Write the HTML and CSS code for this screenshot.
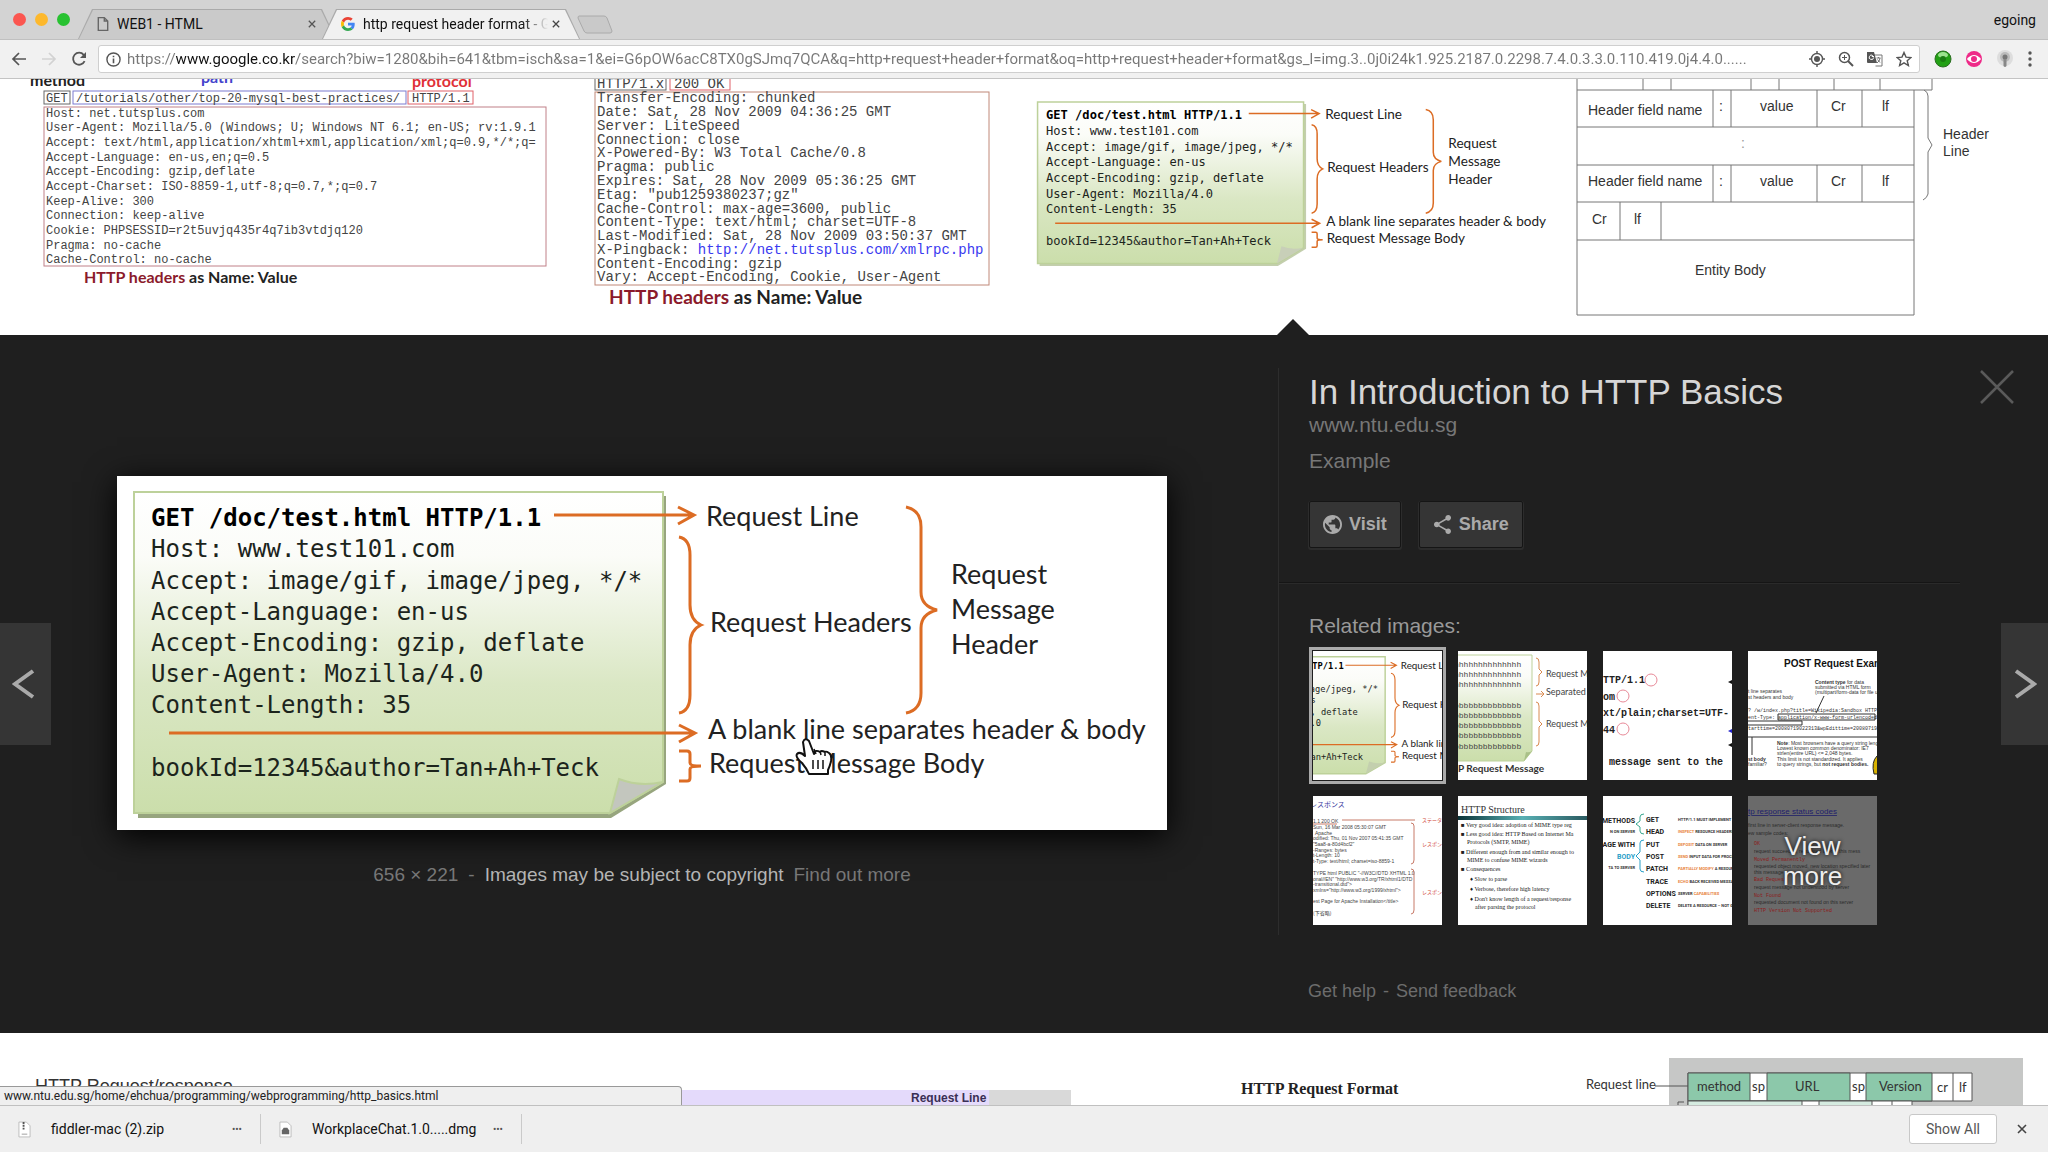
FILE: index.html
```html
<!DOCTYPE html>
<html lang="en">
<head>
  <meta charset="UTF-8" />
  <title>http request header format - Google Search</title>
  <link rel="stylesheet" href="styles.css">
</head>
<body>

  <header class="tabstrip">
    <div class="lights">
      <span class="light red"></span>
      <span class="light yellow"></span>
      <span class="light green"></span>
    </div>
    <div class="tabs">
      <div class="tab">
        <svg class="tab-icon" viewBox="0 0 14 18" width="12" height="16"><path d="M1.5 1.5h7l4 4v11h-11zM8.5 1.5v4h4" fill="none" stroke="#666" stroke-width="1.6"/></svg>
        <span class="tab-title">WEB1 - HTML</span>
        <button class="tab-close" aria-label="Close tab"><svg viewBox="0 0 10 10" width="8" height="8"><path d="M1 1l8 8M9 1l-8 8" stroke="#555" stroke-width="1.6"/></svg></button>
      </div>
      <div class="tab active">
        <svg class="tab-icon" viewBox="0 0 48 48" width="14" height="14">
          <path fill="#EA4335" d="M24 9.5c3.54 0 6.71 1.22 9.21 3.6l6.85-6.85C35.9 2.38 30.47 0 24 0 14.62 0 6.51 5.38 2.56 13.22l7.98 6.19C12.43 13.72 17.74 9.5 24 9.5z"/>
          <path fill="#4285F4" d="M46.98 24.55c0-1.57-.15-3.09-.38-4.55H24v9.02h12.94c-.58 2.96-2.26 5.48-4.78 7.18l7.73 6c4.51-4.18 7.09-10.36 7.09-17.65z"/>
          <path fill="#FBBC05" d="M10.53 28.59c-.48-1.45-.76-2.99-.76-4.59s.27-3.14.76-4.59l-7.98-6.19C.92 16.46 0 20.12 0 24c0 3.88.92 7.54 2.56 10.78l7.97-6.19z"/>
          <path fill="#34A853" d="M24 48c6.48 0 11.93-2.13 15.89-5.81l-7.73-6c-2.15 1.45-4.92 2.3-8.16 2.3-6.26 0-11.57-4.22-13.47-9.91l-7.98 6.19C6.51 42.62 14.62 48 24 48z"/>
        </svg>
        <span class="tab-title fade">http request header format - G</span>
        <button class="tab-close" aria-label="Close tab"><svg viewBox="0 0 10 10" width="8" height="8"><path d="M1 1l8 8M9 1l-8 8" stroke="#444" stroke-width="1.6"/></svg></button>
      </div>
      <button class="new-tab" aria-label="New tab"><svg viewBox="0 0 36 19" width="36" height="19"><path d="M2 1h25q2 0 3 2l5 13q0 2-2 2H10q-2 0-3-2L1 3q0-2 1-2z" fill="#c9c9c9" stroke="#aaa"/></svg></button>
    </div>
    <span class="profile">egoing</span>
  </header>

  <nav class="toolbar">
    <button aria-label="Back"><svg viewBox="0 0 16 16" width="16" height="16"><path d="M15 8H2M8 2L2 8l6 6" fill="none" stroke="#555" stroke-width="1.7"/></svg></button>
    <button aria-label="Forward"><svg viewBox="0 0 16 16" width="16" height="16"><path d="M1 8h13M8 2l6 6-6 6" fill="none" stroke="#d2d2d2" stroke-width="1.7"/></svg></button>
    <button aria-label="Reload"><svg viewBox="0 0 16 16" width="16" height="16"><path d="M13.6 10.2a6 6 0 1 1-.9-6.4l1.3 1.5" fill="none" stroke="#555" stroke-width="1.8"/><path d="M15 1v6H9z" fill="#555"/></svg></button>
    <div class="omnibox">
      <svg viewBox="0 0 16 16" width="15" height="15"><circle cx="8" cy="8" r="7" fill="none" stroke="#555" stroke-width="1.5"/><path d="M8 7v5M8 4v1.6" stroke="#555" stroke-width="1.7"/></svg>
      <input type="text" class="url" aria-label="Address" value="https://www.google.co.kr/search?biw=1280&amp;bih=641&amp;tbm=isch&amp;sa=1&amp;ei=G6pOW6acC8TX0gSJmq7QCA&amp;q=http+request+header+format&amp;oq=http+request+header+format&amp;gs_l=img.3..0j0i24k1.925.2187.0.2298.7.4.0.3.3.0.110.419.0j4.4.0......">
      <svg viewBox="0 0 16 16" width="16" height="16"><circle cx="8" cy="8" r="5.5" fill="none" stroke="#555" stroke-width="1.4"/><circle cx="8" cy="8" r="3" fill="#555"/><path d="M8 0v3M8 13v3M0 8h3M13 8h3" stroke="#555" stroke-width="1.4"/></svg>
      <svg viewBox="0 0 16 16" width="16" height="16"><circle cx="6.5" cy="6.5" r="5" fill="none" stroke="#555" stroke-width="1.5"/><path d="M10 10l5 5" stroke="#555" stroke-width="2"/><path d="M4 6.5h5M6.5 4v5" stroke="#555"/></svg>
      <svg viewBox="0 0 16 16" width="16" height="16"><path d="M7 4h8v11H8.5" fill="none" stroke="#777"/><path d="M0 1h7l3 11H1q-1 0-1-1z" fill="#555"/><path d="M7 5.5H4.8M6.6 6.5a2.2 2.2 0 1 1-.8-1.9" fill="none" stroke="#fff"/><path d="M9.5 7h4M11.5 6v1M10 12q3-2 3-5M10.5 8.5l2.5 3" fill="none" stroke="#777"/></svg>
      <svg viewBox="0 0 16 16" width="16" height="16"><path d="M8 1.5l2 4.6 5 .4-3.8 3.2 1.2 4.8L8 11.9l-4.4 2.6 1.2-4.8L1 6.5l5-.4z" fill="none" stroke="#555" stroke-width="1.4"/></svg>
    </div>
    <svg viewBox="0 0 18 18" width="18" height="18"><circle cx="9" cy="9" r="8" fill="#22a015" stroke="#2b6e22"/><ellipse cx="9" cy="5" rx="5" ry="3" fill="#9be28e"/><circle cx="9" cy="9" r="3" fill="#1a7d12"/></svg>
    <svg viewBox="0 0 18 18" width="16" height="16"><circle cx="9" cy="9" r="9" fill="#ee2a88"/><path d="M1 9q8-9 16 0-8 9-16 0z" fill="#fff"/><circle cx="9" cy="9" r="3.4" fill="#ee2a88"/></svg>
    <svg viewBox="0 0 18 18" width="18" height="18"><circle cx="9" cy="8" r="8" fill="#ddd"/><circle cx="9" cy="7" r="5" fill="#bbb"/><circle cx="9" cy="7" r="2.5" fill="#777"/><path d="M7.5 9h3v7q-1.500 2-3 0z" fill="#888"/></svg>
    <button class="menu" aria-label="Menu"><svg viewBox="0 0 4 16" width="4" height="16"><circle cx="2" cy="2" r="1.7" fill="#555"/><circle cx="2" cy="8" r="1.7" fill="#555"/><circle cx="2" cy="14" r="1.7" fill="#555"/></svg></button>
  </nav>

  <main class="page">

    <section class="results first-row">
      <svg class="result" viewBox="0 79 570 256">
        <g class="lato b16">
          <text x="30" y="86" fill="#222">method</text>
          <text x="201" y="83" fill="#4444cc">path</text>
          <text x="412" y="87" fill="#e03038">protocol</text>
          <text x="84" y="283" fill="#8b1a2b">HTTP headers <tspan fill="#222">as Name: Value</tspan></text>
        </g>
        <g fill="none">
          <rect x="44" y="91" width="26" height="13" stroke="#666"/>
          <rect x="73" y="91" width="333" height="13" stroke="#7b7bd0"/>
          <rect x="408" y="91" width="65" height="13" stroke="#e06068"/>
          <rect x="44" y="107" width="502" height="159" stroke="#c08088"/>
        </g>
        <g class="mono m12" fill="#444">
          <text x="46" y="102">GET</text>
          <text x="76" y="102">/tutorials/other/top-20-mysql-best-practices/</text>
          <text x="412" y="102">HTTP/1.1</text>
          <text x="46" y="117">Host: net.tutsplus.com</text>
          <text x="46" y="131">User-Agent: Mozilla/5.0 (Windows; U; Windows NT 6.1; en-US; rv:1.9.1</text>
          <text x="46" y="146">Accept: text/html,application/xhtml+xml,application/xml;q=0.9,*/*;q=</text>
          <text x="46" y="161">Accept-Language: en-us,en;q=0.5</text>
          <text x="46" y="175">Accept-Encoding: gzip,deflate</text>
          <text x="46" y="190">Accept-Charset: ISO-8859-1,utf-8;q=0.7,*;q=0.7</text>
          <text x="46" y="205">Keep-Alive: 300</text>
          <text x="46" y="219">Connection: keep-alive</text>
          <text x="46" y="234">Cookie: PHPSESSID=r2t5uvjq435r4q7ib3vtdjq120</text>
          <text x="46" y="249">Pragma: no-cache</text>
          <text x="46" y="263">Cache-Control: no-cache</text>
        </g>
      </svg>

      <svg class="result" viewBox="570 79 450 256">
        <g fill="none">
          <rect x="595" y="70" width="71" height="20" stroke="#666"/>
          <rect x="670" y="70" width="60" height="20" stroke="#e06068"/>
          <rect x="595" y="92" width="394" height="193" stroke="#c08878"/>
        </g>
        <g class="mono m14" fill="#444">
          <text x="597" y="88">HTTP/1.x</text>
          <text x="674" y="88">200 OK</text>
          <text x="597" y="102">Transfer-Encoding: chunked</text>
          <text x="597" y="116">Date: Sat, 28 Nov 2009 04:36:25 GMT</text>
          <text x="597" y="130">Server: LiteSpeed</text>
          <text x="597" y="144">Connection: close</text>
          <text x="597" y="157">X-Powered-By: W3 Total Cache/0.8</text>
          <text x="597" y="171">Pragma: public</text>
          <text x="597" y="185">Expires: Sat, 28 Nov 2009 05:36:25 GMT</text>
          <text x="597" y="199">Etag: "pub1259380237;gz"</text>
          <text x="597" y="213">Cache-Control: max-age=3600, public</text>
          <text x="597" y="226">Content-Type: text/html; charset=UTF-8</text>
          <text x="597" y="240">Last-Modified: Sat, 28 Nov 2009 03:50:37 GMT</text>
          <text x="597" y="254">X-Pingback: <tspan fill="#3a3af0">http://net.tutsplus.com/xmlrpc.php</tspan></text>
          <text x="597" y="268">Content-Encoding: gzip</text>
          <text x="597" y="281">Vary: Accept-Encoding, Cookie, User-Agent</text>
        </g>
        <text class="lato b19" x="609" y="304" fill="#8b1a2b">HTTP headers <tspan fill="#222">as Name: Value</tspan></text>
      </svg>

      <svg class="result" viewBox="1020 79 540 256">
        <svg x="1029" y="94" width="528" height="178" viewBox="117 475 1050 354">
          <path d="M138 495h530v288l-56 34H138z" fill="#a9b98a" opacity=".7"/>
          <path d="M134 491h529v290l-53 31H134z" fill="url(#paper)" stroke="#bdd19a" stroke-width="3"/>
          <path d="M610 812l9-34q20 8 44 3z" fill="#c8cfb8"/>
          <g class="console">
            <text class="bold" x="151" y="525">GET /doc/test.html HTTP/1.1</text>
            <text x="151" y="556">Host: www.test101.com</text>
            <text x="151" y="588">Accept: image/gif, image/jpeg, */*</text>
            <text x="151" y="619">Accept-Language: en-us</text>
            <text x="151" y="650">Accept-Encoding: gzip, deflate</text>
            <text x="151" y="681">User-Agent: Mozilla/4.0</text>
            <text x="151" y="712">Content-Length: 35</text>
            <text x="151" y="775">bookId=12345&amp;author=Tan+Ah+Teck</text>
          </g>
          <g class="arrows">
            <path d="M554 514h138M678 506l16 8-16 9"/>
            <path d="M169 732h524M679 724l16 8-16 9"/>
            <path d="M679 536q11 2 11 18v50q0 15 11 20-11 5-11 20v50q0 16-11 18"/>
            <path d="M679 750h8q3 0 3 3v9q0 3 11 3-11 0-11 3v9q0 3-3 3h-8"/>
            <path d="M906 506q15 3 15 20v65q0 14 16 18-16 4-16 18v65q0 17-15 20"/>
          </g>
          <g class="labels">
            <text x="706" y="525">Request Line</text>
            <text x="710" y="631">Request Headers</text>
            <text x="951" y="583">Request</text>
            <text x="951" y="618">Message</text>
            <text x="951" y="653">Header</text>
            <text x="708" y="738">A blank line separates header &amp; body</text>
            <text x="709" y="772">Request Message Body</text>
          </g>
        </svg>
      </svg>

      <svg class="result" viewBox="1560 79 488 256">
        <g fill="none" stroke="#777">
          <path d="M1577 79v236h337V90M1577 90h355V79M1643 79v11M1671 79v11M1751 79v11M1779 79v11M1834 79v11M1880 79v11"/>
          <path d="M1577 127h337M1577 165h337M1577 202h337M1577 240h337"/>
          <path d="M1713 90v37M1731 90v37M1817 90v37M1862 90v37M1713 165v37M1731 165v37M1817 165v37M1862 165v37M1620 202v38M1661 202v38"/>
          <path d="M1924 90q4 2 4 6v42l4 7-4 7v42q-1 4-5 6"/>
        </g>
        <g class="arial s14" fill="#333">
          <text x="1588" y="115">Header field name</text><text x="1719" y="111">:</text><text x="1760" y="111">value</text><text x="1831" y="111">Cr</text><text x="1882" y="111">lf</text>
          <text x="1741" y="148" fill="#999">:</text>
          <text x="1588" y="186">Header field name</text><text x="1719" y="186">:</text><text x="1760" y="186">value</text><text x="1831" y="186">Cr</text><text x="1882" y="186">lf</text>
          <text x="1592" y="224">Cr</text><text x="1634" y="224">lf</text>
          <text x="1695" y="275">Entity Body</text>
          <text x="1943" y="139">Header</text><text x="1943" y="156">Line</text>
        </g>
      </svg>
    </section>

    <section class="viewer">
      <button class="nav prev" aria-label="Previous"><svg viewBox="0 0 24 30" width="24" height="30"><path d="M21 2L3 15l18 13" fill="none" stroke="#aaa" stroke-width="4"/></svg></button>

      <figure class="stage">
        <svg class="photo" viewBox="117 475 1050 354">
          <defs>
            <linearGradient id="paper" x1="0" y1="0" x2="0" y2="1">
              <stop offset="0" stop-color="#fff"/>
              <stop offset=".2" stop-color="#fbfcf8"/>
              <stop offset=".6" stop-color="#dae7c4"/>
              <stop offset="1" stop-color="#cbdeab"/>
            </linearGradient>
          </defs>
          <path d="M138 495h528v288l-55 34H138z" fill="#97a57e"/>
          <path d="M134 491h529v290l-53 31H134z" fill="url(#paper)" stroke="#bdd19a" stroke-width="2"/>
          <path d="M610 812l9-34q20 8 44 3z" fill="#c3c6be" stroke="#bdd19a" stroke-width="2"/>
          <g class="console">
            <text class="bold" x="151" y="525">GET /doc/test.html HTTP/1.1</text>
            <text x="151" y="556">Host: www.test101.com</text>
            <text x="151" y="588">Accept: image/gif, image/jpeg, */*</text>
            <text x="151" y="619">Accept-Language: en-us</text>
            <text x="151" y="650">Accept-Encoding: gzip, deflate</text>
            <text x="151" y="681">User-Agent: Mozilla/4.0</text>
            <text x="151" y="712">Content-Length: 35</text>
            <text x="151" y="775">bookId=12345&amp;author=Tan+Ah+Teck</text>
          </g>
          <g class="arrows">
            <path d="M554 514h138M678 506l16 8-16 9"/>
            <path d="M169 732h524M679 724l16 8-16 9"/>
            <path d="M679 536q11 2 11 18v50q0 15 11 20-11 5-11 20v50q0 16-11 18"/>
            <path d="M679 750h8q3 0 3 3v9q0 3 11 3-11 0-11 3v9q0 3-3 3h-8"/>
            <path d="M906 506q15 3 15 20v65q0 14 16 18-16 4-16 18v65q0 17-15 20"/>
          </g>
          <g class="labels">
            <text x="706" y="525">Request Line</text>
            <text x="710" y="631">Request Headers</text>
            <text x="951" y="583">Request</text>
            <text x="951" y="618">Message</text>
            <text x="951" y="653">Header</text>
            <text x="708" y="738">A blank line separates header &amp; body</text>
            <text x="709" y="772">Request Message Body</text>
          </g>
          <!-- hand pointer -->
          <path d="M803 741q2-5 6-1l5 13q1-5 6-2 1-2 5 0 1-1 4 1 3 2 2 8-1 5-3 9v4h-19q-2-5-7-11-7-6-5-9 3-3 8 2z" fill="#fff" stroke="#111" stroke-width="2" stroke-linejoin="round"/>
          <path d="M813 759v9M818 759v9M823 759v9M814 748l2 5M820 750l1 4M825 752v3" fill="none" stroke="#111" stroke-width="1.5"/>
        </svg>
        <figcaption class="caption">
          <span>656 × 221</span><span>-</span><span class="notice">Images may be subject to copyright</span><a href="#">Find out more</a>
        </figcaption>
      </figure>

      <aside class="info">
        <div class="details">
          <h1>In Introduction to HTTP Basics</h1>
          <a class="site" href="#">www.ntu.edu.sg</a>
          <p class="desc">Example</p>
          <div class="actions">
            <button class="action"><svg viewBox="2 2 20 20" width="19" height="19"><path fill="#aaa" d="M12 2C6.480 2 2 6.480 2 12s4.480 10 10 10 10-4.480 10-10S17.520 2 12 2zm-1 17.930c-3.950-.49-7-3.850-7-7.930 0-.62.080-1.210.210-1.790L9 15v1c0 1.100.900 2 2 2v1.930zm6.900-2.540c-.26-.81-1-1.390-1.900-1.390h-1v-3c0-.55-.45-1-1-1H8v-2h2c.550 0 1-.45 1-1V7h2c1.100 0 2-.9 2-2v-.41c2.930 1.190 5 4.060 5 7.410 0 2.080-.8 3.970-2.100 5.390z"/></svg>Visit</button>
            <button class="action"><svg viewBox="2 2 20 20" width="19" height="19"><path fill="#aaa" d="M18 16.080c-.76 0-1.440.3-1.960.77L8.910 12.700c.050-.23.090-.46.090-.7s-.04-.47-.09-.7l7.050-4.110c.540.500 1.250.810 2.040.810 1.660 0 3-1.340 3-3s-1.340-3-3-3-3 1.340-3 3c0 .240.040.470.090.700L8.040 9.810C7.500 9.310 6.790 9 6 9c-1.660 0-3 1.340-3 3s1.340 3 3 3c.790 0 1.500-.31 2.040-.81l7.120 4.160c-.05.210-.08.430-.08.650 0 1.610 1.310 2.920 2.920 2.920s2.920-1.310 2.920-2.920-1.310-2.920-2.920-2.920z"/></svg>Share</button>
          </div>
          <hr>
          <h2>Related images:</h2>
          <div class="thumbs">
            <svg class="thumb selected" viewBox="465 475 354 354">
              <path d="M134 491h529v290l-53 31H134z" fill="url(#paper)" stroke="#bdd19a" stroke-width="4"/>
              <path d="M610 812l9-34q20 8 44 3z" fill="#c3cfae"/>
              <g class="console">
                <text class="bold" x="463" y="525">TP/1.1</text>
                <text x="456" y="588">age/jpeg, */*</text>
                <text x="458" y="619">s</text>
                <text x="458" y="650">, deflate</text>
                <text x="458" y="681">.0</text>
                <text x="458" y="775">an+Ah+Teck</text>
              </g>
              <g class="arrows">
                <path d="M554 514h138M678 506l16 8-16 9M465 732h228M679 724l16 8-16 9"/>
                <path d="M679 536q11 2 11 18v50q0 15 11 20-11 5-11 20v50q0 16-11 18M679 750h8q3 0 3 3v9q0 3 11 3-11 0-11 3v9q0 3-3 3h-8"/>
              </g>
              <g class="labels">
                <text x="706" y="525">Request L</text>
                <text x="710" y="631">Request H</text>
                <text x="708" y="738">A blank lin</text>
                <text x="709" y="772">Request M</text>
              </g>
            </svg>

            <svg class="thumb" viewBox="0 0 129 129">
              <path d="M-2 4h76v96l-8 10H-2z" fill="url(#paper)" stroke="#bdd19a"/>
              <path d="M66 110l2-9q3 1 6-1z" fill="#a9c088"/>
              <g class="mono m8" fill="#444">
                <text x="-4" y="16">hhhhhhhhhhhhhh</text><text x="-4" y="26">hhhhhhhhhhhhhh</text><text x="-4" y="36">hhhhhhhhhhhhhh</text>
                <text x="-4" y="57">bbbbbbbbbbbbbb</text><text x="-4" y="67">bbbbbbbbbbbbbb</text><text x="-4" y="77">bbbbbbbbbbbbbb</text><text x="-4" y="87">bbbbbbbbbbbbbb</text><text x="-4" y="98">bbbbbbbbbbbbbb</text>
              </g>
              <path d="M78 7q3 0 3 4v7l3 3-3 3v7q0 4-3 4M78 51q3 0 3 4v15l3 3-3 3v15q0 4-3 4M78 43h8l-3-3M86 43l-3 3" fill="none" stroke="#d98a50"/>
              <g class="lato s9" fill="#444"><text x="88" y="26">Request M</text><text x="88" y="44">Separated</text><text x="88" y="76">Request M</text></g>
              <text class="lato b10" x="0" y="121" fill="#333">P Request Message</text>
            </svg>

            <svg class="thumb" viewBox="0 0 129 129">
              <g class="mono b10" fill="#222">
                <text x="0" y="32">TTP/1.1</text><text x="0" y="49">om</text><text x="0" y="65">xt/plain;charset=UTF-</text><text x="0" y="82">44</text><text x="6" y="114">message sent to the</text>
              </g>
              <g fill="none" stroke="#e88a98"><circle cx="48" cy="29" r="6"/><circle cx="20" cy="45" r="6"/><circle cx="20" cy="78" r="6"/></g>
              <path d="M125 31l4-2v4zM125 94l4-2v4z" fill="#111"/><path d="M125 80l4-2v4z" fill="#22c"/>
            </svg>

            <svg class="thumb" viewBox="0 0 129 129">
              <text class="arial b10" x="36" y="16" fill="#111">POST Request Exam</text>
              <g class="arial s5" fill="#333">
                <text x="67" y="33"><tspan font-weight="bold">Content type</tspan> for data</text><text x="67" y="38">submitted via HTML form</text><text x="67" y="43">(multipart/form-data for file up</text>
                <text x="0" y="42">t line separates</text><text x="0" y="48">st headers and body</text>
                <text x="29" y="94"><tspan font-weight="bold">Note</tspan>: Most browsers have a query string length</text><text x="29" y="99">Lowest known common denominator: IE7</text><text x="29" y="104">strlen(entire URL) &lt;= 2,048 bytes.</text><text x="29" y="110">This limit is not standardized. It applies</text><text x="29" y="115">to query strings, but <tspan font-weight="bold">not request bodies.</tspan></text>
                <text x="0" y="110" font-weight="bold">st body</text><text x="0" y="115">familiar?</text>
              </g>
              <g class="mono m5" fill="#333"><text x="0" y="61">? /w/index.php?title=Wikipedia:Sandbox HTTP/1</text><text x="0" y="68">ent-Type: application/x-www-form-urlencoded</text><text x="0" y="79">tarttime=20080719022313&amp;wpEdittime=20080719</text></g>
              <path d="M76 45l-8 17M30 63h97v6H30zM0 70h54v4H0M0 86h129M4 86v18" fill="none" stroke="#333"/>
              <path d="M129 105q-6 6-3 18h3" fill="#d8b200" stroke="#222"/>
            </svg>

            <svg class="thumb" viewBox="0 0 129 129">
              <text class="jp s7" x="-3" y="11" fill="#3a3aa0">レスポンス</text>
              <g class="arial s5" fill="#444">
                <text x="0" y="27">1.1 200 OK</text><text x="0" y="33">Sun, 16 Mar 2008 05:30:07 GMT</text><text x="2" y="39">Apache</text><text x="0" y="44">odified: Thu, 01 Nov 2007 05:41:35 GMT</text><text x="0" y="50">"5aa8-a-80d4bcf2"</text><text x="0" y="56">-Ranges: bytes</text><text x="0" y="61">t-Length: 10</text><text x="0" y="67">t-Type: text/html; charset=iso-8859-1</text>
                <text x="0" y="79">TYPE html PUBLIC "-//W3C//DTD XHTML 1.0</text><text x="0" y="85">onal//EN" "http://www.w3.org/TR/xhtml1/DTD</text><text x="0" y="90">-transitional.dtd"&gt;</text><text x="0" y="96">xmlns="http://www.w3.org/1999/xhtml"&gt;</text><text x="0" y="107">est Page for Apache Installation&lt;/title&gt;</text>
              </g>
              <path d="M0 28h24M29 24h73M98 27q3 0 3 3v34q0 4-3 4M98 73q3 0 3 3v38q0 4-3 4" fill="none" stroke="#c77a68"/>
              <g class="jp s5" fill="#d04838"><text x="109" y="26">ステータ</text><text x="109" y="50">レスポン</text><text x="109" y="98">レスポン</text></g>
              <text class="jp s5" x="0" y="119" fill="#333">(下省略)</text>
            </svg>

            <svg class="thumb" viewBox="0 0 129 129">
              <linearGradient id="band"><stop offset="0" stop-color="#0c3438"/><stop offset=".5" stop-color="#58b0b4"/><stop offset="1" stop-color="#2a5a60"/></linearGradient>
              <text class="serif s10" x="3" y="17" fill="#333">HTTP Structure</text>
              <rect y="20" width="129" height="4" fill="url(#band)"/>
              <g class="serif s6" fill="#222">
                <text x="3" y="31">■ Very good idea: adoption of MIME type reg</text><text x="3" y="40">■ Less good idea: HTTP Based on Internet Ma</text><text x="9" y="48">Protocols (SMTP, MIME)</text><text x="3" y="58">■ Different enough from and similar enough to</text><text x="9" y="66">MIME to confuse MIME wizards</text><text x="3" y="75">■ Consequences</text><text x="12" y="85">♦ Slow to parse</text><text x="12" y="95">♦ Verbose, therefore high latency</text><text x="12" y="105">♦ Don't know length of a request/response</text><text x="17" y="113">after parsing the protocol</text>
              </g>
            </svg>

            <svg class="thumb" viewBox="0 0 129 129">
              <g class="roboto b7" fill="#222">
                <text x="32" y="27" text-anchor="end">METHODS</text><text x="32" y="51" text-anchor="end">AGE WITH</text><text x="32" y="63" text-anchor="end" fill="#2aa0c8">BODY</text>
                <text x="43" y="26">GET</text><text x="43" y="38">HEAD</text><text x="43" y="51">PUT</text><text x="43" y="63">POST</text><text x="43" y="75">PATCH</text><text x="43" y="88">TRACE</text><text x="43" y="100">OPTIONS</text><text x="43" y="112">DELETE</text>
              </g>
              <g class="roboto b4" fill="#333">
                <text x="32" y="37" text-anchor="end">N ON SERVER</text><text x="32" y="73" text-anchor="end">TA TO SERVER</text>
                <text x="75" y="25">HTTP/1.1 MUST IMPLEMENT</text><text x="75" y="37"><tspan class="org">INSPECT</tspan> RESOURCE HEADERS</text><text x="75" y="50"><tspan class="org">DEPOSIT</tspan> DATA ON SERVER</text><text x="75" y="62"><tspan class="org">SEND</tspan> INPUT DATA FOR PROCESS</text><text x="75" y="74"><tspan class="org">PARTIALLY MODIFY</tspan> A RESOURCE</text><text x="75" y="87"><tspan class="org">ECHO</tspan> BACK RECEIVED MESSAGE</text><text x="75" y="99">SERVER <tspan class="org">CAPABILITIES</tspan></text><text x="75" y="111">DELETE A RESOURCE – NOT GUA</text>
              </g>
              <path d="M41 18q-4 0-4 3v4l-4 3 4 3v4q0 3 4 3" fill="none" stroke="#38a890"/>
              <path d="M41 44q-4 0-4 3v9l-4 4 4 4v9q0 3 4 3" fill="none" stroke="#2aa0c8"/>
            </svg>

            <a class="more" href="#">
              <svg class="thumb" viewBox="0 0 129 129">
                <rect width="129" height="129" fill="#6a6a6a"/>
                <text class="comic s8" x="0" y="18" fill="#20206a" text-decoration="underline">tp response status codes</text>
                <g class="comic s5" fill="#2a2a2a"><text x="0" y="31">first line in server-client response message.</text><text x="0" y="39">ew sample codes:</text><text x="6" y="57">request succeeded, requested later in this mess</text><text x="6" y="72">requested object moved, new location specified later</text><text x="6" y="78">this message</text><text x="6" y="93">request message not understood by server</text><text x="6" y="108">requested document not found on this server</text></g>
                <g class="mono m5" fill="#8c1c1c"><text x="6" y="49">OK</text><text x="6" y="65">Moved Permanently</text><text x="6" y="85">Bad Request</text><text x="6" y="101">Not Found</text><text x="6" y="116">HTTP Version Not Supported</text></g>
              </svg>
              <span class="more-label">View more</span>
            </a>
          </div>
        </div>
        <div class="help"><a href="#">Get help</a><span>-</span><a href="#">Send feedback</a></div>
      </aside>

      <button class="close" aria-label="Close"><svg viewBox="0 0 34 34" width="34" height="34"><path d="M1 1l32 32M33 1L1 33" stroke="#5a5a5a" stroke-width="2.5"/></svg></button>
      <button class="nav next" aria-label="Next"><svg viewBox="0 0 24 30" width="24" height="30"><path d="M3 2l18 13L3 28" fill="none" stroke="#aaa" stroke-width="4"/></svg></button>
    </section>

    <section class="results second-row">
      <svg class="result" viewBox="0 1032 600 73">
        <text class="arial s18" x="35" y="1091" fill="#333">HTTP Request/response</text>
      </svg>
      <svg class="result" viewBox="600 1032 500 73">
        <rect x="600" y="1089" width="389" height="16" fill="#e4dafb"/>
        <rect x="989" y="1089" width="82" height="16" fill="#d9d9d9"/>
        <text class="arial b12" x="911" y="1101" fill="#3a2f55">Request Line</text>
      </svg>
      <svg class="result" viewBox="1100 1032 460 73">
        <text class="serif b16" x="1241" y="1093" fill="#222">HTTP Request Format</text>
      </svg>
      <svg class="result" viewBox="1560 1032 488 73">
        <rect x="1669" y="1057" width="354" height="48" fill="#c6c7c6"/>
        <path d="M1655 1085h33" stroke="#555"/>
        <g stroke="#555">
          <path d="M1688 1072h284v28h-284z" fill="#fff"/>
          <path d="M1688 1072h62v28h-62zM1767 1072h83v28h-83zM1866 1072h66v28h-66z" fill="#8cc8aa"/>
          <path d="M1953 1072v28M1678 1106v-5h6" fill="none"/>
          <path d="M1688 1100h224v10h-224z" fill="#fff"/>
          <path d="M1688 1100h114v10h-114zM1819 1100h53v10h-53zM1892 1100v8" fill="#d5ebe0"/>
        </g>
        <g class="lato s13" fill="#333">
          <text x="1586" y="1088">Request line</text><text x="1697" y="1090">method</text><text x="1752" y="1090">sp</text><text x="1795" y="1090">URL</text><text x="1852" y="1090">sp</text><text x="1879" y="1090">Version</text><text x="1937" y="1091">cr</text><text x="1959" y="1091">lf</text>
        </g>
      </svg>
    </section>

    <div class="status">www.ntu.edu.sg/home/ehchua/programming/webprogramming/http_basics.html</div>
  </main>

  <footer class="downloads">
    <div class="download">
      <svg viewBox="0 0 14 18" width="13" height="17"><path d="M1 1h8l4 4v12H1z" fill="#fff" stroke="#bbb"/><path d="M6 1v9" stroke="#555" stroke-width="2" stroke-dasharray="2 1"/><path d="M4 14h6" stroke="#999"/></svg>
      <span class="file">fiddler-mac (2).zip</span>
      <button class="dots" aria-label="Options">•••</button>
    </div>
    <div class="download">
      <svg viewBox="0 0 14 18" width="13" height="17"><path d="M1 1h8l4 4v12H1z" fill="#fff" stroke="#bbb"/><path d="M3 14v-4l2-3h4l2 3v4z" fill="#666"/></svg>
      <span class="file">WorkplaceChat.1.0.....dmg</span>
      <button class="dots" aria-label="Options">•••</button>
    </div>
    <button class="show-all">Show All</button>
    <button class="bar-close" aria-label="Close downloads"><svg viewBox="0 0 10 10" width="10" height="10"><path d="M1 1l8 8M9 1l-8 8" stroke="#444" stroke-width="1.6"/></svg></button>
  </footer>

</body>
</html>
```
FILE: styles.css
```css
* {
  box-sizing: border-box;
  margin: 0;
  padding: 0;
}

body {
  font-family: Roboto, 'Liberation Sans', sans-serif;
  background-color: #fff;
  display: flex;
  flex-direction: column;
  height: 100vh;
  overflow: hidden;
}

button {
  background: none;
  border: none;
  font-family: inherit;
  cursor: pointer;
}

a {
  color: inherit;
  text-decoration: none;
}

svg {
  display: block;
  flex-shrink: 0;
}

/* tab strip */
.tabstrip {
  display: flex;
  height: 40px;
  background-color: #d3d3d3;
  border-bottom: 1px solid #c0c0c0;
}

.lights {
  display: flex;
  align-items: center;
  gap: 9px;
  padding-left: 13px;
}

.light {
  width: 13px;
  height: 13px;
  border-radius: 50%;
}

.red { background-color: #fb5650; }
.yellow { background-color: #fdb82c; }
.green { background-color: #28c231; }

.tabs {
  display: flex;
  flex: 1;
  padding: 9px 0 0 8px;
}

.tab {
  position: relative;
  display: flex;
  align-items: center;
  width: 258px;
  margin-right: -14px;
  padding: 0 20px 0 19px;
  background-color: #aaa;
  clip-path: polygon(0 100%, 14px 0, calc(100% - 14px) 0, 100% 100%);
}

.tab::before {
  content: "";
  position: absolute;
  inset: 1px 1px 0;
  background-color: #cacaca;
  clip-path: polygon(0 100%, 14px 0, calc(100% - 14px) 0, 100% 100%);
}

.tab.active::before {
  background-color: #f1f1f1;
}

.tab > * {
  position: relative;
}

.tab-title {
  flex: 1;
  margin: 0 4px 0 8px;
  font-size: 14px;
  color: #111;
  white-space: nowrap;
  overflow: hidden;
}

.fade {
  mask-image: linear-gradient(90deg, #000 86%, transparent);
}

.tab-close {
  padding: 4px 0;
}

.new-tab {
  margin-left: 11px;
  align-self: center;
}

.profile {
  padding: 12px 12px 0 0;
  font-size: 14px;
  color: #111;
}

/* toolbar */
.toolbar {
  display: flex;
  align-items: center;
  gap: 14px;
  height: 39px;
  padding: 0 16px 0 11px;
  background-color: #f1f1f1;
  border-bottom: 1px solid #c4c4c4;
}

.omnibox {
  flex: 1;
  display: flex;
  align-items: center;
  gap: 13px;
  height: 28px;
  margin-left: -3px;
  padding: 0 7px;
  background-color: #fff;
  border: 1px solid #cfcfcf;
  border-radius: 3px;
}

/* the host part of the address is darker than the rest */
.url {
  flex: 1;
  min-width: 0;
  margin-left: -7px;
  border: none;
  outline: none;
  font-family: inherit;
  font-size: 15px;
  color: #777;
  background: linear-gradient(90deg, #777 49px, #111 49px, #111 168px, #777 168px);
  background-clip: text;
  -webkit-text-fill-color: transparent;
}

/* results page */
.page {
  position: relative;
  flex: 1;
  min-height: 0;
  overflow: hidden;
}

.results {
  display: grid;
}

.first-row {
  grid-template-columns: 570fr 450fr 540fr 488fr;
}

.second-row {
  grid-template-columns: 600fr 500fr 460fr 488fr;
}

.result {
  width: 100%;
}

.arial { font-family: 'Liberation Sans', Arial, sans-serif; }
.lato { font-family: Lato, sans-serif; }
.roboto { font-family: Roboto, sans-serif; }
.mono { font-family: 'Liberation Mono', monospace; }
.serif { font-family: 'Liberation Serif', serif; }
.comic { font-family: 'Liberation Sans', sans-serif; }
.jp { font-family: 'Noto Sans CJK JP', sans-serif; }

.m5, .s5 { font-size: 5px; }
.s6 { font-size: 6px; }
.s7 { font-size: 7px; }
.m8, .s8 { font-size: 8px; }
.s9 { font-size: 9px; }
.s10 { font-size: 10px; }
.m12 { font-size: 12px; }
.s13 { font-size: 13px; }
.m14, .s14 { font-size: 14px; }
.s18 { font-size: 18px; }
.b4 { font-size: 4px; font-weight: bold; }
.b7 { font-size: 7px; font-weight: bold; }
.b10 { font-size: 10px; font-weight: bold; }
.b12 { font-size: 12px; font-weight: bold; }
.b16 { font-size: 16px; font-weight: bold; }
.b19 { font-size: 19px; font-weight: bold; }
.org { fill: #e8843c; }

.console {
  font-family: 'DejaVu Sans Mono', monospace;
  font-size: 24px;
  fill: #1c241c;
  white-space: pre;
}

.bold {
  font-weight: bold;
  fill: #000;
}

.labels {
  font-family: Lato, sans-serif;
  font-size: 27px;
  fill: #222;
}

.arrows {
  fill: none;
  stroke: #dc6c24;
  stroke-width: 3px;
}

/* dark image viewer */
.viewer {
  position: relative;
  display: grid;
  grid-template-columns: 1278fr 770fr;
  background-color: #1f1f1f;
  font-family: 'Liberation Sans', Arial, sans-serif;
}

.viewer::before {
  content: "";
  position: absolute;
  top: -16px;
  left: 1277px;
  border: 16px solid transparent;
  border-top: none;
  border-bottom-color: #1f1f1f;
}

.stage {
  display: flex;
  flex-direction: column;
  align-items: center;
  padding: 141px 0 0 6px;
}

.photo {
  width: 1050px;
  max-width: 84%;
  background-color: #fff;
  box-shadow: 0 6px 30px #000;
}

.caption {
  display: flex;
  gap: 10px;
  margin-top: 33px;
  font-size: 19px;
  line-height: 24px;
  color: #777;
}

.notice {
  color: #b4b4b4;
}

.info {
  padding: 33px 88px 31px 0;
}

.details {
  padding: 3px 0 10px 30px;
  border-left: 1px solid #2d2d2d;
}

h1 {
  font-size: 35px;
  font-weight: normal;
  line-height: 42px;
  color: #d6d6d6;
}

.site, .desc, h2 {
  display: block;
  font-size: 21px;
  font-weight: normal;
  line-height: 24px;
  color: #777;
}

.desc {
  margin-top: 12px;
}

.actions {
  display: flex;
  gap: 18px;
  margin-top: 28px;
}

.action {
  display: flex;
  align-items: center;
  gap: 7px;
  height: 47px;
  padding: 0 13px;
  background-color: #353535;
  border: 1px solid #151515;
  border-radius: 2px;
  box-shadow: 0 1px 0 1px #2c2c2c;
  font-size: 18px;
  font-weight: bold;
  color: #aaa;
}

hr {
  margin: 34px 0 30px -30px;
  border: none;
  border-top: 1px solid #151515;
  border-bottom: 1px solid #2a2a2a;
}

h2 {
  color: #999;
}

.thumbs {
  display: grid;
  grid-template-columns: repeat(4, 129px);
  gap: 16px;
  margin: 13px 0 0 4px;
}

.thumb {
  width: 129px;
  height: 129px;
  background-color: #fff;
  overflow: hidden;
}

.selected {
  outline: 3px solid #aaa;
  outline-offset: 1px;
}

.more {
  position: relative;
}

.more-label {
  position: absolute;
  inset: 0;
  display: flex;
  align-items: center;
  padding: 0 34px;
  text-align: center;
  font-size: 26px;
  line-height: 30px;
  color: #eee;
  text-shadow: 0 0 4px #000;
}

.help {
  display: flex;
  gap: 7px;
  margin: 45px 0 0 30px;
  font-size: 18px;
  line-height: 22px;
  color: #6c6c6c;
}

.nav {
  position: absolute;
  top: 50%;
  transform: translateY(-50%);
  display: flex;
  align-items: center;
  height: 122px;
  padding: 0 12px;
  background-color: #353535;
}

.prev {
  left: 0;
  width: 51px;
}

.next {
  right: 0;
  width: 47px;
}

.close {
  position: absolute;
  top: 35px;
  right: 34px;
}

.status {
  position: absolute;
  left: 0;
  bottom: 0;
  width: 682px;
  padding: 0 4px;
  font-size: 12px;
  line-height: 18px;
  color: #222;
  background-color: #efefef;
  border: 1px solid #999;
  border-left: none;
  border-bottom: none;
  border-top-right-radius: 4px;
}

/* download bar */
.downloads {
  display: flex;
  align-items: center;
  height: 47px;
  background-color: #efefef;
  border-top: 1px solid #c0c0c0;
}

.download {
  display: flex;
  align-items: center;
  width: 261px;
  height: 30px;
  padding: 0 18px;
  border-right: 1px solid #cacaca;
}

.file {
  flex: 1;
  margin-left: 20px;
  font-size: 14px;
  color: #111;
}

.dots {
  font-size: 10px;
  color: #555;
}

.show-all {
  margin-left: auto;
  height: 30px;
  width: 88px;
  background-color: #fff;
  border: 1px solid #c8c8c8;
  border-radius: 3px;
  font-size: 14px;
  color: #555;
}

.bar-close {
  margin: 0 21px 0 20px;
}
```
